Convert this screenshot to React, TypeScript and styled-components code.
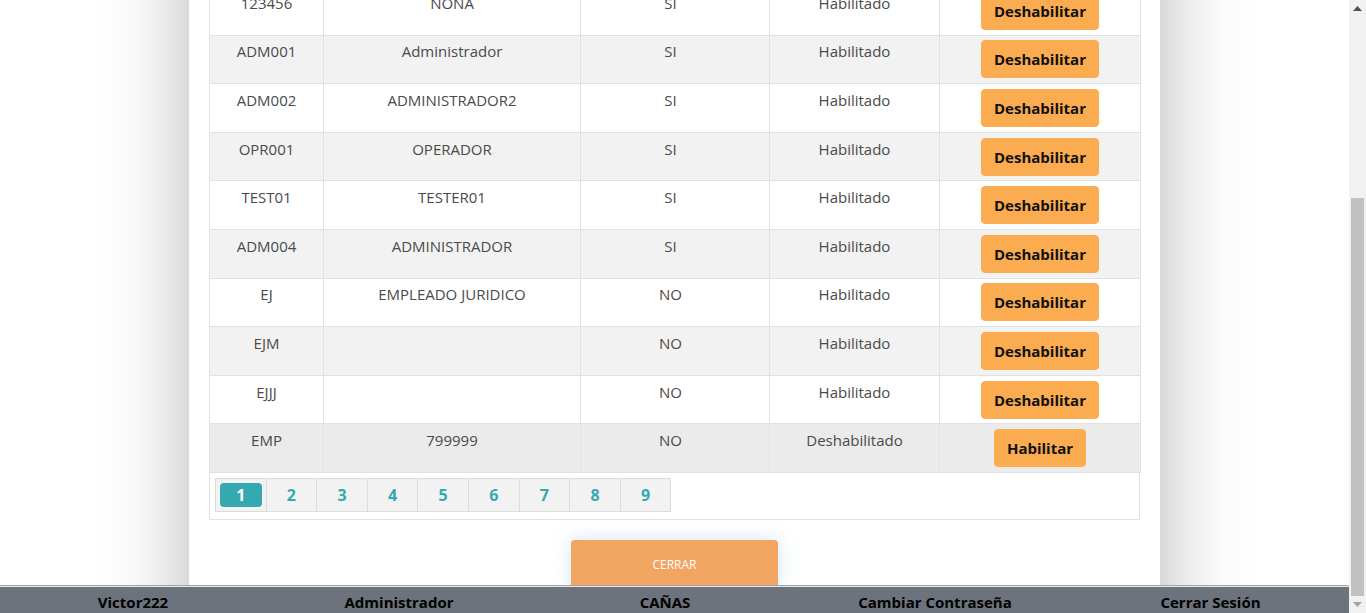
import React, { useLayoutEffect, useRef } from "react";
import styled, { createGlobalStyle } from "styled-components";

const GlobalStyle = createGlobalStyle`
  html, body { margin: 0; padding: 0; height: 100%; overflow: hidden; background: #fff; }
  body { font-family: "Open Sans", "DejaVu Sans", sans-serif; }
  #root { height: 100%; }
  * { box-sizing: border-box; }
`;

const Screen = styled.div`
  display: flex;
  width: 100vw;
  height: 100vh;
  overflow: hidden;
`;

const Viewport = styled.div`
  position: relative;
  flex: 1;
  min-width: 0;
  height: 100%;
  overflow: hidden;
`;

const Scroller = styled.div`
  height: 100%;
  overflow: hidden;
`;

const Page = styled.div`
  display: flex;
  justify-content: center;
  padding-top: 40px;
`;

const Panel = styled.div`
  width: 971px;
  background: #fff;
  padding: 24px 20px 80px;
  box-shadow: 0 0 80px rgba(0, 0, 0, 0.3);
  display: flex;
  flex-direction: column;
  align-items: stretch;
`;

const Title = styled.h2`
  margin: 0 0 20px;
  font-size: 22px;
  font-weight: 600;
  color: #444;
  text-align: center;
`;

const Table = styled.table`
  width: 100%;
  table-layout: fixed;
  border-collapse: collapse;
  font-size: 15px;
  color: #4a4a4a;
`;

const HeadCell = styled.th`
  border: 1px solid #dee2e6;
  padding: 8px 4.8px;
  font-weight: 700;
  color: #333;
  text-align: center;
`;

const Row = styled.tr<{ $striped: boolean; $hover: boolean }>`
  background: ${(p) => (p.$hover ? "#ebebeb" : p.$striped ? "#f2f2f2" : "#fff")};
`;

const Cell = styled.td<{ $narrow?: boolean }>`
  border: 1px solid #dee2e6;
  padding: 4.8px;
  padding-right: ${(p) => (p.$narrow ? "13.8px" : "4.8px")};
  line-height: 22.5px;
  text-align: center;
  vertical-align: top;
  white-space: nowrap;
`;

const ActionButton = styled.button`
  display: inline-block;
  font-family: "Open Sans", sans-serif;
  font-size: 15px;
  font-weight: 700;
  color: #111;
  background: #fbab50;
  border: 1px solid #fbab50;
  border-radius: 4px;
  padding: 6px 12px;
  line-height: 24px;
  height: 38px;
  cursor: pointer;
`;

const Pager = styled.div`
  border: 1px solid #dee2e6;
  border-top: none;
  padding: 5px 5px 7px;
  display: flex;
`;

const PageList = styled.ul`
  list-style: none;
  margin: 0;
  padding: 0;
  display: flex;
`;

const PageItem = styled.li`
  width: 51.6px;
  height: 34px;
  padding: 4px;
  background: #f2f2f2;
  border: 1px solid #dcdcdc;
  margin-left: -1px;
  &:first-child { margin-left: 0; }
`;

const PageLink = styled.a<{ $active: boolean }>`
  display: flex;
  align-items: center;
  justify-content: center;
  width: 100%;
  height: 100%;
  border-radius: 4px;
  font-size: 16px;
  font-weight: 700;
  color: ${(p) => (p.$active ? "#fff" : "#35a8b0")};
  background: ${(p) => (p.$active ? "#35a8b0" : "transparent")};
  text-decoration: none;
`;

const CloseButton = styled.button`
  align-self: center;
  margin-top: 20px;
  width: 207px;
  height: 50px;
  border: none;
  border-radius: 4px;
  background: #f2a461;
  color: #fff;
  font-family: "Open Sans", sans-serif;
  font-size: 12px;
  box-shadow: 0 0 18px rgba(120, 180, 230, 0.35);
`;

const Footer = styled.footer`
  position: absolute;
  left: 0;
  right: 0;
  bottom: 0;
  height: 28px;
  border-top: 1px solid #a4a4a4;
  box-shadow: inset 0 1px 0 #e8e8e8;
  background: #6c737c;
  display: grid;
  grid-template-columns: 266px 266px 266px 274px 1fr;
  align-items: start;
  padding-top: 4px;
`;

const FooterItem = styled.span`
  text-align: center;
  font-size: 15px;
  font-weight: 700;
  color: #000;
  line-height: 24px;
`;

const ScrollBar = styled.div`
  width: 17px;
  flex: none;
  background: #f1f1f1;
  display: flex;
  flex-direction: column;
`;

const Arrow = styled.div`
  height: 17px;
  flex: none;
  display: flex;
  align-items: center;
  justify-content: center;
`;

const Track = styled.div`
  flex: 1;
  display: flex;
  flex-direction: column;
  padding: 0 2px;
`;

const Thumb = styled.div`
  margin-top: 181px;
  height: 398px;
  background: #c1c1c1;
`;

type Usuario = [string, string, string, boolean];

const rows: Usuario[] = [
  ["123456", "NONA", "SI", true],
  ["ADM001", "Administrador", "SI", true],
  ["ADM002", "ADMINISTRADOR2", "SI", true],
  ["OPR001", "OPERADOR", "SI", true],
  ["TEST01", "TESTER01", "SI", true],
  ["ADM004", "ADMINISTRADOR", "SI", true],
  ["EJ", "EMPLEADO JURIDICO", "NO", true],
  ["EJM", "", "NO", true],
  ["EJJJ", "", "NO", true],
  ["EMP", "799999", "NO", false],
];

const widths = [114, 257, 189, 170, 201];

export default function App() {
  const scrollerRef = useRef<HTMLDivElement>(null);
  const firstRowRef = useRef<HTMLTableRowElement>(null);

  useLayoutEffect(() => {
    const s = scrollerRef.current;
    const r = firstRowRef.current;
    if (!s || !r) return;
    const diff = r.getBoundingClientRect().top - s.getBoundingClientRect().top;
    s.scrollTop = diff + 13;
  }, []);

  return (
    <>
      <GlobalStyle />
      <Screen>
        <Viewport>
          <Scroller ref={scrollerRef}>
            <Page>
              <Panel>
                <Title>Usuarios</Title>
                <div>
                  <Table>
                    <colgroup>
                      {widths.map((w, i) => (
                        <col key={i} style={{ width: w }} />
                      ))}
                    </colgroup>
                    <thead>
                      <tr>
                        <HeadCell>Usuario</HeadCell>
                        <HeadCell>Nombre</HeadCell>
                        <HeadCell>Administrador</HeadCell>
                        <HeadCell>Estado</HeadCell>
                        <HeadCell>Acción</HeadCell>
                      </tr>
                    </thead>
                    <tbody>
                      {rows.map(([code, name, admin, enabled], i) => (
                        <Row
                          key={code}
                          ref={i === 0 ? firstRowRef : undefined}
                          $striped={i % 2 === 1}
                          $hover={i === rows.length - 1}
                        >
                          <Cell>{code}</Cell>
                          <Cell>{name}</Cell>
                          <Cell $narrow>{admin}</Cell>
                          <Cell>{enabled ? "Habilitado" : "Deshabilitado"}</Cell>
                          <Cell>
                            <ActionButton>{enabled ? "Deshabilitar" : "Habilitar"}</ActionButton>
                          </Cell>
                        </Row>
                      ))}
                    </tbody>
                  </Table>
                  <Pager>
                    <PageList>
                      {[1, 2, 3, 4, 5, 6, 7, 8, 9].map((n) => (
                        <PageItem key={n}>
                          <PageLink $active={n === 1} href="#">
                            {n}
                          </PageLink>
                        </PageItem>
                      ))}
                    </PageList>
                  </Pager>
                </div>
                <CloseButton>CERRAR</CloseButton>
              </Panel>
            </Page>
          </Scroller>
          <Footer>
            <FooterItem>Victor222</FooterItem>
            <FooterItem>Administrador</FooterItem>
            <FooterItem>CAÑAS</FooterItem>
            <FooterItem>Cambiar Contraseña</FooterItem>
            <FooterItem>Cerrar Sesión</FooterItem>
          </Footer>
        </Viewport>
        <ScrollBar>
          <Arrow>
            <svg width="9" height="5" viewBox="0 0 9 5">
              <path d="M0 5 L4.5 0 L9 5 Z" fill="#505050" />
            </svg>
          </Arrow>
          <Track>
            <Thumb />
          </Track>
          <Arrow>
            <svg width="9" height="5" viewBox="0 0 9 5">
              <path d="M0 0 L4.5 5 L9 0 Z" fill="#a3a3a3" />
            </svg>
          </Arrow>
        </ScrollBar>
      </Screen>
    </>
  );
}
